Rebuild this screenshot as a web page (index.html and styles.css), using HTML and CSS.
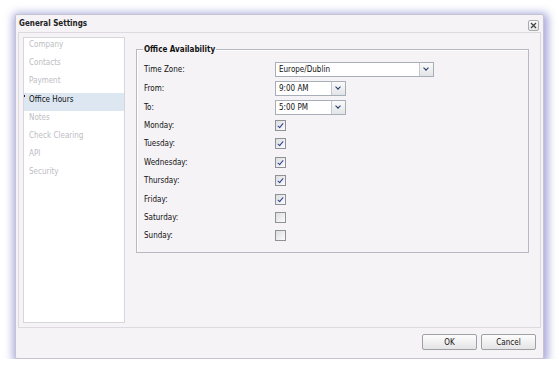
FILE: index.html
```html
<!DOCTYPE html>
<html>
<head>
    <title>General Settings</title>
    <link rel="stylesheet" href="styles.css">
</head>
<body>
    <div class="dialog">
        <div class="titlebar">
            <span class="title">General Settings</span>
            <span class="close">
                <svg width="7" height="7" viewBox="0 0 7 7"><path d="M1 1L6 6M6 1L1 6" stroke="#444" stroke-width="1.3"/></svg>
            </span>
        </div>

        <div class="panel">
            <ul class="nav">
                <li class="disabled">Company</li>
                <li class="disabled">Contacts</li>
                <li class="disabled">Payment</li>
                <li class="selected">Office Hours</li>
                <li class="disabled">Notes</li>
                <li class="disabled">Check Clearing</li>
                <li class="disabled">API</li>
                <li class="disabled">Security</li>
            </ul>

            <div class="content">
                <fieldset class="group">
                    <legend>Office Availability</legend>
                    <div class="form">
                        <label>Time Zone:</label>
                        <div class="combo wide"><span class="value">Europe/Dublin</span><span class="arrow"></span></div>

                        <label>From:</label>
                        <div class="combo"><span class="value">9:00 AM</span><span class="arrow"></span></div>

                        <label>To:</label>
                        <div class="combo"><span class="value">5:00 PM</span><span class="arrow"></span></div>

                        <label>Monday:</label>
                        <span class="check checked"></span>

                        <label>Tuesday:</label>
                        <span class="check checked"></span>

                        <label>Wednesday:</label>
                        <span class="check checked"></span>

                        <label>Thursday:</label>
                        <span class="check checked"></span>

                        <label>Friday:</label>
                        <span class="check checked"></span>

                        <label>Saturday:</label>
                        <span class="check"></span>

                        <label>Sunday:</label>
                        <span class="check"></span>
                    </div>
                </fieldset>
            </div>
        </div>

        <div class="footer">
            <button class="btn">OK</button>
            <button class="btn">Cancel</button>
        </div>
    </div>
</body>
</html>
```

FILE: styles.css
```css
body {
    margin: 0;
    background: #fff;
    font-family: "DejaVu Sans Condensed", "Liberation Sans", sans-serif;
    font-size: 8px;
    color: #111;
}

.dialog {
    margin: 14px 0 0 15px;
    width: 527px;
    height: 343px;
    background: #f5f3f6;
    border: 1px solid #c6c4d2;
    border-radius: 2px;
    box-shadow: 1px 2px 8px 3px rgba(95, 95, 190, 0.55);
    display: flex;
    flex-direction: column;
}

.titlebar {
    height: 17px;
    display: flex;
    align-items: center;
    justify-content: space-between;
    padding: 0 2px 0 3px;
}

.title {
    font-weight: bold;
    font-size: 8px;
    color: #222;
}

.close {
    width: 9px;
    height: 9px;
    border: 1px solid #a9a9b0;
    border-radius: 2px;
    background: linear-gradient(#fbfbfb, #e6e6e8);
    display: flex;
    align-items: center;
    justify-content: center;
    margin: 4px 2px 0 0;
}

.panel {
    margin: 0 2px;
    height: 286px;
    border: 1px solid #dcdae0;
    display: flex;
    padding: 4px;
}

.nav {
    list-style: none;
    margin: 0;
    padding: 0;
    width: 100px;
    background: #fff;
    border: 1px solid #d6d6dc;
}

.nav li {
    height: 18.2px;
    line-height: 14px;
    padding-left: 5px;
    position: relative;
}

.nav .disabled {
    color: #bdbdc2;
}

.nav .selected {
    background: #dce7f2;
    color: #111;
}

.nav .selected::before {
    content: "";
    position: absolute;
    left: 0;
    top: 2px;
    width: 1px;
    height: 2px;
    background: #222;
}

.content {
    flex: 1;
    padding: 8px 7px 0 11px;
}

.group {
    margin: 0;
    height: 206px;
    padding: 0 0 0 7px;
    border: 1px solid #b9b9c4;
    box-shadow: inset 1px 1px 0 #fff;
}

.group legend {
    font-weight: bold;
    font-size: 8px;
    padding: 0 1px;
    margin-left: -1px;
}

.form {
    display: grid;
    grid-template-columns: 131px auto;
    grid-template-rows: 19px 19px 18.4px;
    grid-auto-rows: 18.4px;
    align-items: center;
    justify-items: start;
    padding-top: 6px;
}

.combo {
    width: 69px;
    height: 13px;
    border: 1px solid #a8aeb8;
    background: #fff;
    display: flex;
    align-items: stretch;
}

.combo.wide {
    width: 157px;
}

.combo .value {
    flex: 1;
    font-size: 8px;
    line-height: 13px;
    padding-left: 3px;
}

.combo .arrow {
    width: 13px;
    border-left: 1px solid #c3c7ce;
    background: linear-gradient(#fafafa, #e2e4e8);
    position: relative;
}

.combo .arrow::after {
    content: "";
    position: absolute;
    left: 4px;
    top: 3px;
    width: 3px;
    height: 3px;
    border-right: 1.5px solid #1f3562;
    border-bottom: 1.5px solid #1f3562;
    transform: rotate(45deg);
}

.check {
    width: 9px;
    height: 9px;
    border: 1px solid #8f9196;
    background: linear-gradient(135deg, #dcdde0, #fbfbfc);
    position: relative;
}

.check.checked::after {
    content: "";
    position: absolute;
    left: 3px;
    top: 1px;
    width: 2px;
    height: 5px;
    border-right: 1.5px solid #2b3f8f;
    border-bottom: 1.5px solid #2b3f8f;
    transform: rotate(40deg);
}

.footer {
    flex: 1;
    display: flex;
    justify-content: flex-end;
    align-items: flex-start;
    gap: 4px;
    padding: 6px 7px 0 0;
}

.btn {
    width: 55px;
    height: 16px;
    padding: 0;
    font-family: inherit;
    font-size: 8px;
    color: #111;
    border: 1px solid #9fa0a6;
    border-radius: 2px;
    background: linear-gradient(#fdfdfd, #e4e4e6);
}
```
